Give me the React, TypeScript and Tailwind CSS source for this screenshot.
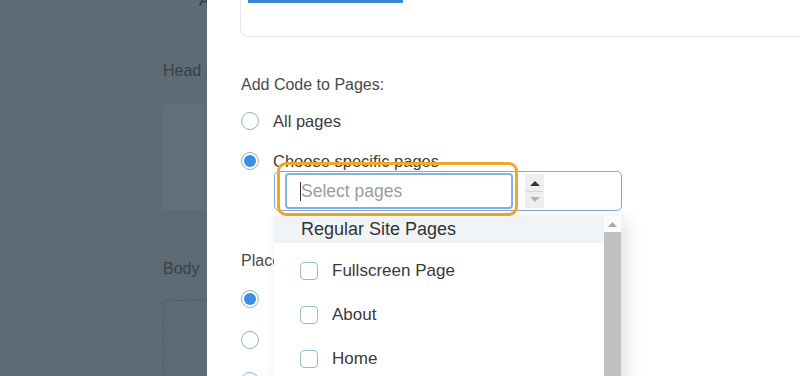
import React from 'react';

const font = "font-['Liberation_Sans',Arial,sans-serif]";

function Radio({ checked }: { checked?: boolean }) {
  return (
    <span className="w-[18px] h-[18px] shrink-0 rounded-full border-[1.5px] border-[#8fb2cc] bg-white flex items-center justify-center">
      {checked && <span className="w-[12px] h-[12px] rounded-full bg-[#3a8ee6]" />}
    </span>
  );
}

function RadioRow({ label, checked, className }: { label: string; checked?: boolean; className: string }) {
  return (
    <div className={`h-[20px] flex items-center gap-[14px] ${className}`}>
      <Radio checked={checked} />
      <span className="text-[16.5px] leading-[20px] text-[#3c3c3c] whitespace-nowrap">{label}</span>
    </div>
  );
}

function Triangle({ up, color, w = 10, h = 5 }: { up?: boolean; color: string; w?: number; h?: number }) {
  return (
    <svg width={w} height={h} viewBox={`0 0 ${w} ${h}`}>
      <polygon points={up ? `0,${h} ${w},${h} ${w / 2},0` : `0,0 ${w},0 ${w / 2},${h}`} fill={color} />
    </svg>
  );
}

const pages = ['Fullscreen Page', 'About', 'Home'];

export default function App() {
  return (
    <div className={`w-[800px] h-[376px] overflow-hidden flex ${font}`}>
      {/* dimmed page behind the modal */}
      <div className="w-[207px] shrink-0 bg-[#5e6a74] overflow-hidden">
        <div className="-mt-[9px] pl-[199px] text-[16px] leading-[20px] text-[#2f3a42]">A</div>
        <div className="mt-[50px] pl-[163px] text-[16px] leading-[20px] text-[#36414a] whitespace-nowrap">Head</div>
        <div className="mt-[24px] ml-[163px] h-[105px] bg-[#63707a]" />
        <div className="mt-[49px] pl-[163px] text-[16px] leading-[20px] text-[#36414a] whitespace-nowrap">Body</div>
        <div className="mt-[21px] ml-[163px] h-[100px] border border-dashed border-r-0 border-[#4d5961] rounded-l-[3px]" />
      </div>

      {/* modal */}
      <div className="flex-1 bg-white pl-[34px] overflow-hidden">
        <div className="-ml-[1px] h-[37px] border border-t-0 border-r-0 border-[#dfe9ee] rounded-bl-[8px]">
          <div className="ml-[7px] w-[155px] h-[3px] bg-[#3a86d6]" />
        </div>

        <div className="mt-[38px] text-[16px] leading-[20px] text-[#4a4a4a]">Add Code to Pages:</div>
        <RadioRow className="mt-[16px]" label="All pages" />
        <RadioRow className="mt-[20px]" label="Choose specific pages" checked />

        <div className="relative ml-[33px] w-[348px] h-[40px] border border-[#84aacb] rounded-[5px] flex items-stretch p-[1px] pl-[10px]">
          <div className="w-[228px] border-2 border-[#80b3e2] rounded-[4px] flex items-center pl-[13px]">
            <span className="w-[1px] h-[19px] bg-[#333]" />
            <span className="text-[17.5px] leading-[20px] text-[#9c9c9c] whitespace-nowrap">Select pages</span>
          </div>
          <div className="ml-[12px] my-[1px] w-[19px] bg-[#efefef] flex flex-col items-center justify-center">
            <Triangle up color="#333" />
            <div className="w-[17px] h-[1px] bg-[#d4d4d4] my-[5px]" />
            <Triangle color="#b3b3b3" />
          </div>

          {/* highlight ring */}
          <div className="absolute left-[2px] -top-[10px] w-[241px] h-[54px] border-[3px] border-[#f1a72c] rounded-[9px]" />

          {/* dropdown */}
          <div className="absolute -left-[1px] top-[44px] w-[347px] h-[170px] bg-white shadow-[6px_4px_18px_rgba(0,0,0,0.12)] flex z-10">
            <div className="flex-1 flex flex-col">
              <div className="h-[27px] shrink-0 bg-[#f0f4f7] pl-[27px] flex items-center text-[18px] text-[#333] whitespace-nowrap">
                Regular Site Pages
              </div>
              <div className="pt-[6px]">
                {pages.map((p) => (
                  <div key={p} className="h-[44px] flex items-center pl-[26px] gap-[14px]">
                    <span className="w-[18px] h-[18px] rounded-[4px] border-[1.5px] border-[#9abdd4] bg-white" />
                    <span className="text-[17px] leading-[20px] text-[#3a3a3a] whitespace-nowrap">{p}</span>
                  </div>
                ))}
              </div>
            </div>
            <div className="w-[17px] flex flex-col bg-[#fbfbfb]">
              <div className="h-[16px] shrink-0 flex items-center justify-center">
                <Triangle up color="#a6a6a6" w={9} h={5} />
              </div>
              <div className="flex-1 bg-[#c1c1c1]" />
            </div>
          </div>
        </div>

        <div className="mt-[40px] text-[16px] leading-[20px] text-[#4a4a4a] whitespace-nowrap">Place Code in:</div>
        <RadioRow className="mt-[18px]" label="Body - start" checked />
        <RadioRow className="mt-[21px]" label="Body - end" />
        <RadioRow className="mt-[21px]" label="Head" />
      </div>
    </div>
  );
}
